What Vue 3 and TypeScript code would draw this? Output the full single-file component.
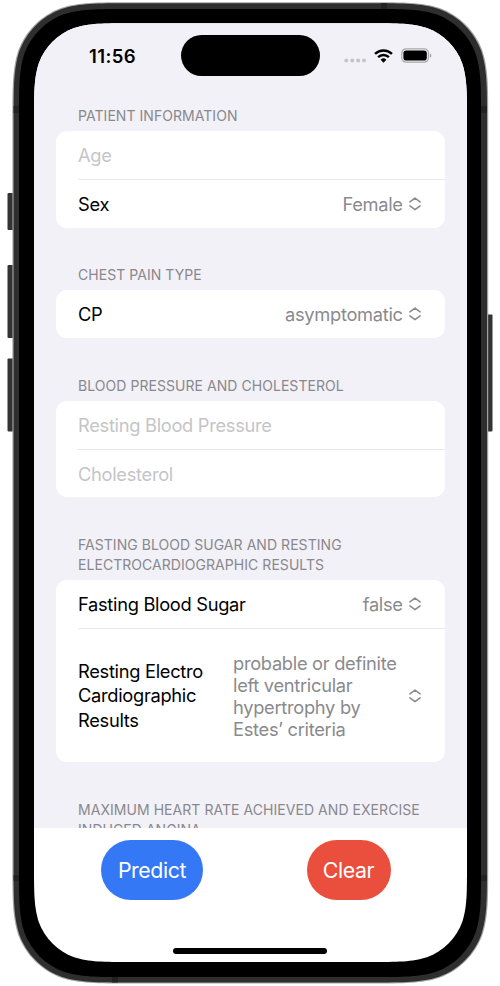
<script setup lang="ts">
import { ref } from 'vue'

/** Rounded rectangle with continuous-curvature corners. */
function smoothRect(x: number, y: number, w: number, h: number, r: number): string {
  const a = 1.528665 * r
  const b = 1.088493 * r
  const c = 0.868407 * r
  const d = 0.631494 * r
  const e = 0.074911 * r
  const f = 0.372824 * r
  const g = 0.16906 * r
  const R = x + w
  const B = y + h
  return [
    `M${x + a} ${y}H${R - a}`,
    `C${R - b} ${y} ${R - c} ${y} ${R - d} ${y + e}`,
    `C${R - f} ${y + g} ${R - g} ${y + f} ${R - e} ${y + d}`,
    `C${R} ${y + c} ${R} ${y + b} ${R} ${y + a}V${B - a}`,
    `C${R} ${B - b} ${R} ${B - c} ${R - e} ${B - d}`,
    `C${R - g} ${B - f} ${R - f} ${B - g} ${R - d} ${B - e}`,
    `C${R - c} ${B} ${R - b} ${B} ${R - a} ${B}H${x + a}`,
    `C${x + b} ${B} ${x + c} ${B} ${x + d} ${B - e}`,
    `C${x + f} ${B - g} ${x + g} ${B - f} ${x + e} ${B - d}`,
    `C${x} ${B - c} ${x} ${B - b} ${x} ${B - a}V${y + a}`,
    `C${x} ${y + b} ${x} ${y + c} ${x + e} ${y + d}`,
    `C${x + g} ${y + f} ${x + f} ${y + g} ${x + d} ${y + e}`,
    `C${x + c} ${y} ${x + b} ${y} ${x + a} ${y}Z`,
  ].join('')
}

const edge = smoothRect(12.4, 2.2, 475.8, 981.2, 77)
const rim = smoothRect(13.6, 3.2, 473.4, 979.2, 76)
const bezel = smoothRect(19, 9, 462, 968, 71)
const glass = smoothRect(34, 23.3, 433, 938.7, 63.5)

interface Row {
  label: string
  kind: 'input' | 'picker'
  value?: string
  tall?: boolean
}
interface Section {
  title: string
  rows: Row[]
}

const sections = ref<Section[]>([
  {
    title: 'Patient Information',
    rows: [
      { label: 'Age', kind: 'input', value: '' },
      { label: 'Sex', kind: 'picker', value: 'Female' },
    ],
  },
  { title: 'Chest Pain Type', rows: [{ label: 'CP', kind: 'picker', value: 'asymptomatic' }] },
  {
    title: 'Blood Pressure and Cholesterol',
    rows: [
      { label: 'Resting Blood Pressure', kind: 'input', value: '' },
      { label: 'Cholesterol', kind: 'input', value: '' },
    ],
  },
  {
    title: 'Fasting Blood Sugar and Resting Electrocardiographic Results',
    rows: [
      { label: 'Fasting Blood Sugar', kind: 'picker', value: 'false' },
      {
        label: 'Resting Electro Cardiographic Results',
        kind: 'picker',
        value: 'probable or definite left ventricular hypertrophy by Estes’ criteria',
        tall: true,
      },
    ],
  },
  { title: 'Maximum Heart Rate Achieved and Exercise Induced Angina', rows: [] },
])

function clearForm(): void {
  for (const section of sections.value) {
    for (const row of section.rows) {
      if (row.kind === 'input') row.value = ''
    }
  }
}
</script>

<template>
  <div class="device">
    <svg class="shell" width="500" height="986" viewBox="0 0 500 986">
      <defs>
        <clipPath id="upper"><rect x="0" y="0" width="500" height="828" /></clipPath>
      </defs>
      <g fill="#333">
        <rect x="7.5" y="193" width="7" height="37" rx="1" />
        <rect x="7.5" y="265" width="7" height="73" rx="1" />
        <rect x="7.5" y="358.500" width="7" height="73" rx="1" />
        <rect x="486" y="314.500" width="6.500" height="117" rx="1" />
      </g>
      <path :d="edge" fill="#a2a2a2" />
      <path :d="rim" fill="#2e2e2e" />
      <g fill="#222">
        <rect x="13.600" y="106" width="6" height="7" />
        <rect x="481" y="106" width="6" height="7" />
        <rect x="381" y="3.200" width="6" height="6" />
        <rect x="13.600" y="875" width="6" height="6" />
        <rect x="481" y="875" width="6" height="6" />
        <rect x="112" y="977" width="6" height="5.400" />
      </g>
      <path :d="bezel" fill="#000" />
      <path :d="glass" fill="#fff" />
      <path :d="glass" fill="#f2f1f7" clip-path="url(#upper)" />
    </svg>

    <div class="screen">
      <header class="status">
        <span class="time">11:56</span>
        <span class="island"></span>
        <span class="indicators">
          <svg class="dots" width="23" height="5" viewBox="0 0 23 5" fill="#c5c4c9">
            <circle cx="2.300" cy="2.500" r="2" />
            <circle cx="8.200" cy="2.500" r="2" />
            <circle cx="14.100" cy="2.500" r="2" />
            <circle cx="20" cy="2.500" r="2" />
          </svg>
          <svg class="wifi" width="19" height="14" viewBox="0 0 19 14">
            <g fill="none" stroke="#000" stroke-width="2.400">
              <path d="M1 4.900A12.200 12.200 0 0 1 18 4.900" />
              <path d="M4.100 8.200A7.800 7.800 0 0 1 14.900 8.200" />
            </g>
            <path d="M9.500 13.700L6.600 10.700A4.200 4.200 0 0 1 12.400 10.700Z" />
          </svg>
          <svg class="battery" width="31" height="15" viewBox="0 0 31 15">
            <rect x=".8" y=".8" width="26.600" height="13.400" rx="4.200" fill="none" stroke="#a9a9ad" stroke-width="1.200" />
            <rect x="2.400" y="2.400" width="23.400" height="10.200" rx="2.800" />
            <path d="M28.800 5.400C31 6 31 9 28.800 9.600Z" fill="#a9a9ad" />
          </svg>
        </span>
      </header>

      <main class="form">
        <section v-for="section in sections" :key="section.title" class="section">
          <h2 class="title">{{ section.title }}</h2>
          <div v-if="section.rows.length" class="card">
            <div v-for="row in section.rows" :key="row.label" class="row" :class="{ tall: row.tall }">
              <input v-if="row.kind === 'input'" v-model="row.value" class="field" :placeholder="row.label" />
              <template v-else>
                <span class="label">{{ row.label }}</span>
                <span class="value">{{ row.value }}</span>
                <svg class="chevrons" width="12" height="14" viewBox="0 0 12 14">
                  <path d="M.9 4.900L6 1.100L11.100 4.900M.9 8.900L6 12.700L11.100 8.900" />
                </svg>
              </template>
            </div>
          </div>
        </section>
      </main>

      <footer class="footer">
        <div class="actions">
          <button class="action predict" type="button">Predict</button>
          <button class="action clear" type="button" @click="clearForm">Clear</button>
        </div>
        <span class="home"></span>
      </footer>
    </div>
  </div>
</template>

<style>
body {
  background: #fff;
}
</style>

<style scoped>
.device {
  position: relative;
  box-sizing: border-box;
  width: 500px;
  height: 986px;
  padding: 23px 33px 24px 34px;
  overflow: hidden;
  font-family: Inter, 'Liberation Sans', sans-serif;
}
.shell {
  position: absolute;
  left: 0;
  top: 0;
}
.screen {
  position: relative;
  display: flex;
  flex-direction: column;
  height: 939px;
}
.status {
  display: grid;
  grid-template-columns: 147px 139px 1fr;
  align-items: center;
  flex: none;
  height: 41px;
  padding-top: 12px;
}
.time {
  padding-left: 55px;
  font-size: 18.5px;
  font-weight: 600;
  letter-spacing: 0.4px;
}
.island {
  height: 41px;
  border-radius: 21px;
  background: #000;
}
.indicators {
  display: flex;
  align-items: center;
  padding-left: 24px;
}
.dots {
  margin-top: 9px;
}
.wifi {
  margin-left: 7px;
}
.battery {
  margin-left: 7.5px;
}
.form {
  flex: none;
  box-sizing: border-box;
  height: 752px;
  padding: 29.9px 22px 0;
  overflow: hidden;
}
.section {
  margin-bottom: 37.3px;
}
.title {
  margin: 0 0 5.1px 22px;
  font-size: 14px;
  line-height: 20px;
  font-weight: 400;
  letter-spacing: 0.05px;
  text-transform: uppercase;
  color: #89888d;
}
.card {
  border-radius: 11px;
  background: #fff;
}
.row {
  display: flex;
  align-items: center;
  box-sizing: border-box;
  height: 48.3px;
  margin-left: 22px;
  padding-right: 24px;
  font-size: 18.3px;
  letter-spacing: -0.3px;
}
.row + .row {
  border-top: 1px solid #e8e8ea;
}
.row.tall {
  height: 134.3px;
}
.field {
  width: 100%;
  padding: 0;
  border: 0;
  outline: 0;
  background: none;
  font: inherit;
  letter-spacing: inherit;
}
.field::placeholder {
  color: #c5c5c7;
  opacity: 1;
}
.label {
  flex: 1;
  color: #000;
}
.value {
  color: #8a8a8e;
}
.tall .label {
  flex: none;
  width: 155px;
  padding-right: 20px;
  box-sizing: border-box;
  line-height: 24.2px;
}
.tall .value {
  flex: 1;
  padding-right: 5px;
  line-height: 22px;
}
.chevrons {
  flex: none;
  margin-left: 6.3px;
  fill: none;
  stroke: #8a8a8e;
  stroke-width: 1.5;
  stroke-linecap: round;
  stroke-linejoin: round;
}
.footer {
  display: flex;
  flex-direction: column;
  align-items: center;
  justify-content: space-between;
  box-sizing: border-box;
  height: 134px;
  padding: 12px 1px 8px 0;
}
.actions {
  display: flex;
  justify-content: space-between;
  box-sizing: border-box;
  width: 100%;
  padding: 0 75.5px 0 67px;
}
.action {
  height: 59.5px;
  padding: 0;
  border: 0;
  border-radius: 30px;
  font-family: inherit;
  font-size: 21.3px;
  letter-spacing: -0.4px;
  color: #fff;
}
.predict {
  width: 102px;
  background: #3478f6;
}
.clear {
  width: 84px;
  background: #ea4e3d;
}
.home {
  width: 154px;
  height: 6px;
  border-radius: 3px;
  background: #000;
}
</style>
